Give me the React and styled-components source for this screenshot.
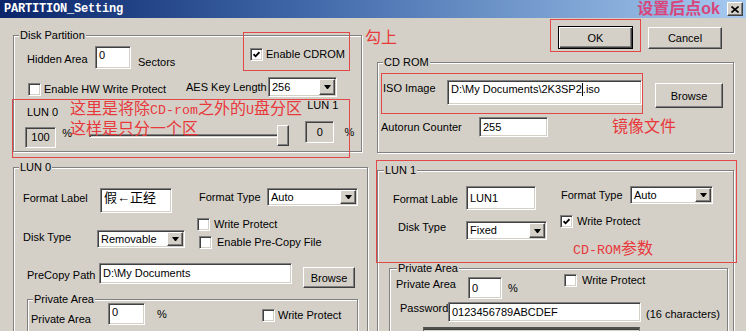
import React from 'react'
import styled, { createGlobalStyle, css } from 'styled-components'

const GlobalStyle = createGlobalStyle`
html, body {
  margin: 0;
  padding: 0;
  background: #d4d0c8;
}
body {
  width: 746px;
  height: 331px;
  overflow: hidden;
}
`;

const sunken = css`
border: 1px solid;
border-color: #808080 #fff #fff #808080;
box-shadow: inset 1px 1px 0 #404040, inset -1px -1px 0 #d4d0c8;
`;

const raised = css`
border: 1px solid;
border-color: #fff #404040 #404040 #fff;
box-shadow: inset -1px -1px 0 #808080, inset 1px 1px 0 #d4d0c8;
`;

const place = css`
flex: none;
margin: ${p => p.$mt || 0}px 0 0 ${p => p.$ml || 0}px;
`;

const Win = styled.div`
position: relative;
width: 746px;
height: 331px;
overflow: hidden;
background: #d4d0c8;
font-family: "Liberation Sans", Arial, sans-serif;
font-size: 11px;
color: #000;
display: flex;
flex-direction: column;
`;

const TitleBar = styled.div`
flex: none;
height: 18px;
display: flex;
align-items: center;
padding: 0 3px 0 4px;
background: linear-gradient(to right, #0a246a 0%, #3f67a8 40%, #a6caf0 100%);
`;

const Title = styled.span`
font-family: "Liberation Mono", monospace;
font-weight: bold;
font-size: 12px;
letter-spacing: -0.2px;
color: #fff;
`;

const TitleNote = styled.span`
margin-left: auto;
margin-right: 7px;
font-family: "Liberation Sans", "Noto Sans CJK SC", sans-serif;
font-weight: bold;
font-size: 16px;
line-height: 16px;
color: #d8467c;
`;

const CloseBtn = styled.div`
${raised};
box-sizing: border-box;
width: 16px;
height: 14px;
background: #d4d0c8;
display: flex;
align-items: center;
justify-content: center;
`;

const Body = styled.div`
flex: 1;
display: flex;
align-items: flex-start;
`;

const LeftCol = styled.div`
flex: none;
box-sizing: border-box;
width: 370px;
padding: 17px 0 0 13px;
display: flex;
flex-direction: column;
align-items: flex-start;
`;

const RightCol = styled.div`
flex: 1;
padding-left: 7px;
display: flex;
flex-direction: column;
align-items: flex-start;
`;

const Group = styled.div`
${place};
position: relative;
box-sizing: border-box;
width: ${p => p.$w}px;
height: ${p => p.$h}px;
border: 1px solid #808080;
box-shadow: inset 1px 1px 0 #fff, 1px 1px 0 #fff;
display: flex;
flex-direction: column;
align-items: flex-start;
`;

const Legend = styled.span`
position: absolute;
top: -7px;
left: ${p => p.$left || 5}px;
padding: 0 1px;
line-height: 13px;
background: #d4d0c8;
white-space: nowrap;
`;

const Row = styled.div`
${place};
display: flex;
align-items: flex-start;
height: ${p => p.$h}px;
`;

const Stack = styled.div`
${place};
display: flex;
flex-direction: column;
align-items: flex-start;
`;

const Text = styled.span`
${place};
display: block;
line-height: 13px;
white-space: nowrap;
width: ${p => (p.$w ? `${p.$w}px` : 'auto')};
`;

const Field = styled.div`
${place};
${sunken};
box-sizing: border-box;
width: ${p => p.$w}px;
height: ${p => p.$h}px;
background: ${p => (p.$readonly ? '#d4d0c8' : '#fff')};
padding: ${p => (p.$top ? '2px 3px 0' : '0 3px')};
display: flex;
align-items: ${p => (p.$top ? 'flex-start' : 'center')};
justify-content: ${p => (p.$readonly ? 'center' : 'flex-start')};
line-height: 13px;
white-space: nowrap;
overflow: hidden;
font-family: "Liberation Sans", "Noto Sans CJK SC", sans-serif;
font-size: ${p => p.$fs || 11}px;
`;

const Caret = styled.span`
display: inline-block;
width: 1px;
height: 13px;
background: #000;
`;

const Combo = styled.div`
${place};
${sunken};
box-sizing: border-box;
width: ${p => p.$w}px;
height: ${p => p.$h}px;
background: #fff;
padding: 1px 1px 1px 3px;
display: flex;
align-items: center;
line-height: 13px;
white-space: nowrap;
`;

const ComboValue = styled.span`
flex: 1;
`;

const DropBtn = styled.span`
${raised};
box-sizing: border-box;
width: 16px;
height: 100%;
background: #d4d0c8;
display: flex;
align-items: center;
justify-content: center;
&::after {
  content: '';
  width: 1px;
  border-left: 3px solid transparent;
  border-right: 3px solid transparent;
  border-top: 4px solid #000;
}
`;

const Button = styled.button`
${place};
${raised};
box-sizing: border-box;
width: ${p => p.$w}px;
height: ${p => p.$h}px;
padding: 0;
background: #d4d0c8;
font-family: inherit;
font-size: 11px;
color: #000;
${p => p.$default && css`
  border: 1px solid #000;
  box-shadow: inset 1px 1px 0 #fff, inset -1px -1px 0 #404040, inset -2px -2px 0 #808080;
`}
`;

const Bar = styled.div`
${place};
box-sizing: border-box;
width: ${p => p.$w}px;
height: ${p => p.$h}px;
background: #d4d0c8;
border-top: 2px solid #505050;
border-left: 1px solid #606060;
border-right: 1px solid #808080;
box-shadow: inset 0 1px 0 #404040;
`;

const CheckItem = styled.label`
${place};
display: flex;
align-items: center;
gap: ${p => p.$gap || 3}px;
width: ${p => (p.$w ? `${p.$w}px` : 'auto')};
line-height: 13px;
white-space: nowrap;
`;

const Box = styled.span`
${sunken};
flex: none;
box-sizing: border-box;
width: 13px;
height: 13px;
background: #fff;
display: flex;
align-items: center;
justify-content: center;
`;

const Slider = styled.div`
${place};
width: ${p => p.$w}px;
height: 21px;
display: flex;
align-items: center;
`;

const Track = styled.span`
${sunken};
box-sizing: border-box;
flex: 1;
height: 4px;
`;

const Thumb = styled.span`
${raised};
flex: none;
box-sizing: border-box;
width: 12px;
height: 21px;
margin-left: -3px;
background: #d4d0c8;
`;

const NoteBox = styled.div`
position: absolute;
left: ${p => p.$x}px;
top: ${p => p.$y}px;
width: ${p => p.$w}px;
height: ${p => p.$h}px;
box-sizing: border-box;
border: 1px solid #e34848;
pointer-events: none;
`;

const NoteText = styled.div`
position: absolute;
left: ${p => p.$x}px;
top: ${p => p.$y}px;
font-family: "Noto Sans CJK SC", sans-serif;
font-size: 16px;
line-height: 17px;
color: #e8383b;
white-space: nowrap;
pointer-events: none;
`;

const Mono = styled.span`
font-family: "Liberation Mono", monospace;
font-size: 13.3px;
`;

const Checkbox = ({ checked, children, ...rest }) => (
  <CheckItem {...rest}>
    <Box>
      {checked && (
        <svg width="7" height="7" viewBox="0 0 7 7">
          <polyline points="0.6,3.2 2.6,5.3 6.4,1.2" fill="none" stroke="#000" strokeWidth="1.8" />
        </svg>
      )}
    </Box>
    <span>{children}</span>
  </CheckItem>
);

const Select = ({ value, ...rest }) => (
  <Combo {...rest}>
    <ComboValue>{value}</ComboValue>
    <DropBtn />
  </Combo>
);

const App = () => {
  return (
    <Win>
      <GlobalStyle />
      <TitleBar>
        <Title>PARTITION_Setting</Title>
        <TitleNote>设置后点ok</TitleNote>
        <CloseBtn>
          <svg width="8" height="7" viewBox="0 0 8 7">
            <path d="M0.5 0.5 L7.5 6.5 M7.5 0.5 L0.5 6.5" stroke="#000" strokeWidth="1.6" />
          </svg>
        </CloseBtn>
      </TitleBar>

      <Body>
        <LeftCol>
          <Group $w={349} $h={117}>
            <Legend>Disk Partition</Legend>
            <Row $mt={10} $h={24}>
              <Text $ml={13} $mt={7} $w={68}>Hidden Area</Text>
              <Field $w={36} $h={23} $top>0</Field>
              <Text $ml={7} $mt={10} $w={112}>Sectors</Text>
              <Checkbox $mt={2} checked>Enable CDROM</Checkbox>
            </Row>
            <Row $mt={7} $h={20}>
              <Checkbox $ml={14} $mt={6} $w={158}>Enable HW Write Protect</Checkbox>
              <Text $mt={4} $w={82}>AES Key Length</Text>
              <Select $w={69} $h={20} value="256" />
            </Row>
            <Row $mt={2} $h={50}>
              <Stack $ml={11}>
                <Text $ml={2} $mt={7}>LUN 0</Text>
                <Field $mt={8} $w={31} $h={21} $readonly>100</Field>
              </Stack>
              <Text $ml={4} $mt={28} $w={27}>%</Text>
              <Slider $mt={26} $w={200}>
                <Track />
                <Thumb />
              </Slider>
              <Stack $ml={16}>
                <Text $ml={2}>LUN 1</Text>
                <Field $mt={9} $w={29} $h={22} $readonly>0</Field>
              </Stack>
              <Text $ml={6} $mt={27}>%</Text>
            </Row>
          </Group>

          <Group $mt={15} $w={355} $h={170}>
            <Legend>LUN 0</Legend>
            <Row $mt={20} $h={25}>
              <Text $ml={9} $mt={4} $w={77}>Format Label</Text>
              <Field $w={72} $h={25} $top $fs={13}>假←正经</Field>
              <Text $ml={27} $mt={3} $w={68}>Format Type</Text>
              <Select $w={91} $h={18} value="Auto" />
            </Row>
            <Row $mt={3} $h={33}>
              <Text $ml={9} $mt={15} $w={74}>Disk Type</Text>
              <Select $mt={14} $w={88} $h={18} value="Removable" />
              <Stack $ml={12}>
                <Checkbox $mt={2} $gap={4}>Write Protect</Checkbox>
                <Checkbox $ml={2} $mt={5} $gap={5}>Enable Pre-Copy File</Checkbox>
              </Stack>
            </Row>
            <Row $mt={14} $h={25}>
              <Text $ml={13} $mt={6} $w={72}>PreCopy Path</Text>
              <Field $w={193} $h={21}>D:\My Documents</Field>
              <Button $ml={11} $mt={4} $w={52} $h={21}>Browse</Button>
            </Row>
            <Group $ml={13} $mt={11} $w={331} $h={50}>
              <Legend>Private Area</Legend>
              <Row $mt={3} $h={22}>
                <Text $ml={3} $mt={10} $w={77}>Private Area</Text>
                <Field $w={37} $h={22} $top>0</Field>
                <Text $ml={12} $mt={5} $w={105}>%</Text>
                <Checkbox $mt={6}>Write Protect</Checkbox>
              </Row>
            </Group>
          </Group>
        </LeftCol>

        <RightCol>
          <Row $mt={8} $h={23}>
            <Button $ml={181} $w={75} $h={23} $default>OK</Button>
            <Button $ml={15} $mt={1} $w={74} $h={22}>Cancel</Button>
          </Row>

          <Group $mt={13} $w={357} $h={91}>
            <Legend>CD ROM</Legend>
            <Row $mt={17} $h={28}>
              <Text $ml={5} $mt={2} $w={64}>ISO Image</Text>
              <Field $w={195} $h={25} $top>D:\My Documents\2K3SP2<Caret />.iso</Field>
              <Button $ml={13} $mt={3} $w={68} $h={25}>Browse</Button>
            </Row>
            <Row $mt={9} $h={20}>
              <Text $ml={3} $mt={4} $w={98}>Autorun Counter</Text>
              <Field $w={69} $h={20}>255</Field>
            </Row>
          </Group>

          <Group $mt={17} $w={357} $h={170}>
            <Legend $left={6}>LUN 1</Legend>
            <Row $mt={15} $h={24}>
              <Text $ml={15} $mt={7} $w={73}>Format Lable</Text>
              <Field $w={70} $h={24}>LUN1</Field>
              <Text $ml={25} $mt={3} $w={69}>Format Type</Text>
              <Select $w={83} $h={18} value="Auto" />
            </Row>
            <Row $mt={4} $h={27}>
              <Text $ml={20} $mt={7} $w={68}>Disk Type</Text>
              <Select $mt={7} $w={81} $h={19} value="Fixed" />
              <Checkbox $ml={13} $mt={1} $gap={4} checked>Write Protect</Checkbox>
            </Row>
            <Group $ml={11} $mt={27} $w={339} $h={70}>
              <Legend $left={7}>Private Area</Legend>
              <Row $mt={5} $h={25}>
                <Text $ml={6} $mt={4} $w={72}>Private Area</Text>
                <Field $mt={3} $w={34} $h={22}>0</Field>
                <Text $ml={6} $mt={8} $w={56}>%</Text>
                <Checkbox $gap={5}>Write Protect</Checkbox>
              </Row>
              <Row $mt={3} $h={20}>
                <Text $ml={10} $w={48}>Password</Text>
                <Field $w={193} $h={20}>0123456789ABCDEF</Field>
                <Text $ml={5} $mt={6}>(16 characters)</Text>
              </Row>
              <Row $mt={5} $h={14}>
                <Bar $ml={33} $w={217} $h={14} />
              </Row>
            </Group>
          </Group>
        </RightCol>
      </Body>

      <NoteBox $x={243} $y={32} $w={107} $h={39} />
      <NoteBox $x={12} $y={99} $w={338} $h={59} />
      <NoteBox $x={550} $y={19} $w={91} $h={33} />
      <NoteBox $x={381} $y={73} $w={262} $h={41} />
      <NoteBox $x={376} $y={160} $w={361} $h={103} />

      <NoteText $x={365} $y={28}>勾上</NoteText>
      <NoteText $x={70} $y={99}>
        这里是将除<Mono>CD-rom</Mono>之外的<Mono>U</Mono>盘分区
        <br />
        这样是只分一个区
      </NoteText>
      <NoteText $x={612} $y={117}>镜像文件</NoteText>
      <NoteText $x={573} $y={239}><Mono>CD-ROM</Mono>参数</NoteText>
    </Win>
  )
}

export default App
